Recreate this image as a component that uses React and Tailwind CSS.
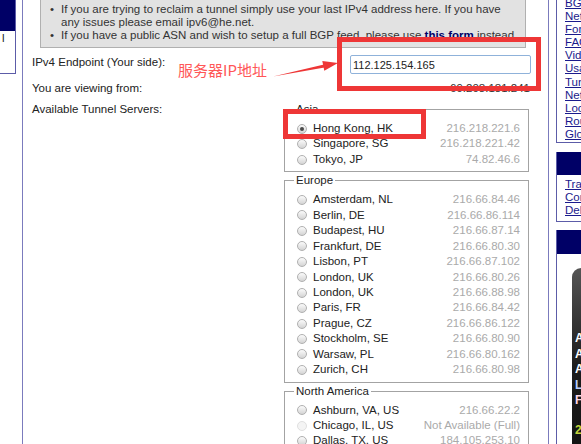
import React from 'react';

const asia = [
  ['Hong Kong, HK', '216.218.221.6', 'checked'],
  ['Singapore, SG', '216.218.221.42'],
  ['Tokyo, JP', '74.82.46.6'],
];

const europe = [
  ['Amsterdam, NL', '216.66.84.46'],
  ['Berlin, DE', '216.66.86.114'],
  ['Budapest, HU', '216.66.87.14'],
  ['Frankfurt, DE', '216.66.80.30'],
  ['Lisbon, PT', '216.66.87.102'],
  ['London, UK', '216.66.80.26'],
  ['London, UK', '216.66.88.98'],
  ['Paris, FR', '216.66.84.42'],
  ['Prague, CZ', '216.66.86.122'],
  ['Stockholm, SE', '216.66.80.90'],
  ['Warsaw, PL', '216.66.80.162'],
  ['Zurich, CH', '216.66.80.98'],
];

const northAmerica = [
  ['Ashburn, VA, US', '216.66.22.2'],
  ['Chicago, IL, US', 'Not Available (Full)', 'disabled'],
  ['Dallas, TX, US', '184.105.253.10'],
  ['Denver, CO, US', '184.105.250.46'],
  ['Fremont, CA, US', '72.52.104.74'],
];

const sideLinks = [
  'BGP Toolkit',
  'Network Map',
  'Forums',
  'FAQ',
  'Videos',
  'Usage Graphs',
  'Tunnel Broker',
  'Network Status',
  'Looking Glass',
  'Routing Tools',
  'Global Reach',
];

const Radio = ({ state }) => {
  if (state === 'disabled') {
    return <span className="w-[10px] h-[10px] rounded-full border border-[#e0e0e0] bg-[#f4f4f4] shrink-0" />;
  }
  return (
    <span className="w-[10px] h-[10px] rounded-full border border-[#b0b0b0] bg-linear-to-b from-[#fbfbfb] to-[#d4d4d4] shrink-0 flex items-center justify-center">
      {state === 'checked' && <span className="w-[4px] h-[4px] rounded-full bg-[#4a4a4a]" />}
    </span>
  );
};

const Region = ({ name, servers }) => (
  <fieldset className="border border-[#a3a3a3] pl-[12px] pr-[8px] pt-[4px] pb-[4px] mt-[1px] first:mt-0">
    <legend className="ml-[-3px] px-[2px] leading-[15px] text-[#222]">{name}</legend>
    {servers.map(([city, ip, state], i) => (
      <div key={i} className="flex items-center h-[15.45px] leading-[15.45px]">
        <Radio state={state} />
        <span className="ml-[6px] text-[#222]">{city}</span>
        <span className="ml-auto text-[#aaaaaa]">{ip}</span>
      </div>
    ))}
  </fieldset>
);

const App = () => {
  return (
    <div className="relative w-[581px] h-[444px] overflow-hidden bg-white text-[11.5px] font-['Liberation_Sans',Arial,sans-serif]">
      <div className="flex items-start">
        {/* Left sidebar (cut off) */}
        <div className="w-[16px] shrink-0 border-r border-b border-[#5c5ca8]">
          <div className="h-[31px] bg-[#000066]" />
          <div className="h-[42px] pl-[2px] pt-[1px] leading-[13px] text-[#222]">l</div>
        </div>

        {/* Main content */}
        <div className="ml-[6px] w-[527px] h-[444px] shrink-0 border-x border-[#7b7bbd]">
          {/* Notice box */}
          <div className="ml-[17px] w-[486px] bg-[#e2e2e2] border-x border-b border-[#b0b0b0] pl-[9px] pt-[3px] pb-[5px] leading-[13px] text-[#333]">
            <div className="flex">
              <span className="w-[11px] shrink-0">•</span>
              <div className="whitespace-nowrap">
                If you are trying to reclaim a tunnel simply use your last IPv4 address here. If you have
                <br />
                any issues please email ipv6@he.net.
              </div>
            </div>
            <div className="flex">
              <span className="w-[11px] shrink-0">•</span>
              <div className="whitespace-nowrap">
                If you have a public ASN and wish to setup a full BGP feed, please use{' '}
                <a className="font-bold underline text-[#000066]">this form</a> instead.
              </div>
            </div>
          </div>

          {/* Form */}
          <div className="pl-[9px] text-[#222]">
            <div className="mt-[7px] flex items-start">
              <div className="w-[252px] leading-[15px]">IPv4 Endpoint (Your side):</div>
              <div className="w-[247px] flex justify-end">
                <input
                  readOnly
                  value="112.125.154.165"
                  className="w-[181px] h-[19px] border border-[#8fb2da] rounded-[2px] pl-[2px] text-[11px] text-[#222] outline-none"
                />
              </div>
            </div>
            <div className="mt-[7px] flex items-start">
              <div className="w-[252px] leading-[15px]">You are viewing from:</div>
              <div className="w-[247px] text-right leading-[15px] pr-[1px] text-[#333]">69.208.181.241</div>
            </div>
            <div className="mt-[6px] flex items-start">
              <div className="w-[252px] leading-[15px]">Available Tunnel Servers:</div>
              <div className="w-[245px]">
                <Region name="Asia" servers={asia} />
                <Region name="Europe" servers={europe} />
                <Region name="North America" servers={northAmerica} />
              </div>
            </div>
          </div>
        </div>

        {/* Right sidebar (cut off) */}
        <div className="ml-[7px] w-[140px] shrink-0">
          <div className="border-l border-b border-[#5c5ca8] pl-[8px] pb-[1px]">
            <div className="-mt-[3px]">
              {sideLinks.map((l) => (
                <div key={l} className="leading-[13.1px] whitespace-nowrap">
                  <a className="underline text-[#1a1a8c]">{l}</a>
                </div>
              ))}
            </div>
          </div>

          <div className="mt-[9px] border-l border-b border-[#5c5ca8]">
            <div className="h-[23px] bg-[#000066]" />
            <div className="pl-[8px] pt-[3px] pb-[4px]">
              {['Transfer Tunnel', 'Contact Us', 'Delete Account'].map((l) => (
                <div key={l} className="leading-[13px] whitespace-nowrap">
                  <a className="underline text-[#1a1a8c]">{l}</a>
                </div>
              ))}
            </div>
          </div>

          <div className="mt-[8px] border-l border-[#5c5ca8] h-[220px]">
            <div className="h-[24px] bg-[#000066]" />
            <div className="pt-[14px] pl-[15px]">
              <div className="h-[200px] rounded-tl-[9px] bg-linear-to-b from-[#555] via-[#1c1c1c] to-[#111] pt-[63px] pl-[3px] font-bold text-[12px] leading-[15.5px] whitespace-nowrap">
                <div className="text-white">All</div>
                <div className="text-white">Any</div>
                <div className="text-white">Any</div>
                <div className="text-[#b8ccff]">Low</div>
                <div className="text-[#ffd8e8]">Fast</div>
                <div className="mt-[14px] text-[#c2d43a]">24/7</div>
              </div>
            </div>
          </div>
        </div>
      </div>

      {/* Annotations drawn over the screenshot */}
      <div className="absolute left-[337px] top-[37px] w-[204px] h-[54px] border-[5px] border-[#ee3636]" />
      <div className="absolute left-[283px] top-[109px] w-[143px] h-[30px] border-[5px] border-[#ee3636]" />
      <div className="absolute left-[178px] top-[60px] leading-[20px] text-[15px] text-[#ff5757] font-['Noto_Sans_CJK_SC',sans-serif]">
        服务器IP地址
      </div>
      <svg className="absolute left-0 top-0" width="581" height="444" viewBox="0 0 581 444">
        <polygon points="273,76.5 324,64.6 324.6,67.4" fill="#ee3636" />
        <polygon points="338,63 322.3,60.9 324.3,70.8" fill="#ee3636" />
      </svg>
    </div>
  );
};

export default App;
